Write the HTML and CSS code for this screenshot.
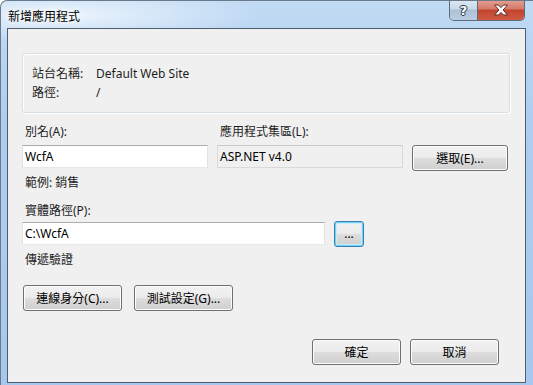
FILE: index.html
```html
<!DOCTYPE html>
<html lang="zh-Hant">
<head>
<meta charset="utf-8">
<title>新增應用程式</title>
<link rel="stylesheet" href="styles.css">
</head>
<body>
<div class="window">
  <div class="titlebar">
    <span class="title">新增應用程式</span>
    <div class="caption-buttons">
      <span class="cb help">?</span>
      <span class="cb close"><svg width="16" height="12" viewBox="0 0 16 12"><path d="M1.5 1h4l2.5 2.6L10.5 1h4l-4.4 5 4.4 5h-4L8 8.4 5.5 11h-4l4.4-5z" fill="#fff" stroke="#5a2a22" stroke-width="1" stroke-linejoin="round"/></svg></span>
    </div>
  </div>
  <div class="client">
    <div class="group">
      <div class="info-row"><span class="info-label">站台名稱:</span><span>Default Web Site</span></div>
      <div class="info-row"><span class="info-label">路徑:</span><span>/</span></div>
    </div>

    <div class="alias-grid">
      <span class="label">別名(A):</span>
      <span class="label">應用程式集區(L):</span>
      <span></span>
      <div class="textbox">WcfA</div>
      <div class="textbox readonly">ASP.NET v4.0</div>
      <button class="btn btn-select">選取(E)...</button>
    </div>

    <div class="label hint">範例: 銷售</div>

    <div class="label path-label">實體路徑(P):</div>
    <div class="path-row">
      <div class="textbox path-box">C:\WcfA</div>
      <button class="btn btn-browse focused">...</button>
    </div>

    <div class="label pass">傳遞驗證</div>

    <div class="btn-row">
      <button class="btn btn-wide">連線身分(C)...</button>
      <button class="btn btn-wide">測試設定(G)...</button>
    </div>

    <div class="dialog-buttons">
      <button class="btn btn-ok">確定</button>
      <button class="btn btn-ok">取消</button>
    </div>
  </div>
</div>
</body>
</html>
```

FILE: styles.css
```css
html, body {
  margin: 0;
  padding: 0;
  background: #ffffff;
}

body {
  font-family: "Noto Sans", "Noto Sans CJK TC", sans-serif;
  font-size: 12px;
  color: #1e1e1e;
}

.window {
  box-sizing: border-box;
  width: 533px;
  height: 385px;
  border: 1px solid #6b7a8a;
  border-bottom: none;
  border-right: none;
  border-radius: 7px 0 0 0;
  padding: 0 7px 0 6px;
  background:
    radial-gradient(ellipse 200px 28px at 60px 14px, rgba(238,246,253,0.95), rgba(238,246,253,0) 100%),
    linear-gradient(to bottom, #c2dbf4 0, #bcd7f3 27px, #aecdef 120px, #a7c8ee 100%);
  overflow: hidden;
}

.titlebar {
  height: 27px;
  display: flex;
  justify-content: space-between;
  align-items: flex-start;
}

.title {
  font-family: "Noto Sans CJK TC", sans-serif;
  font-size: 12px;
  line-height: 14px;
  margin: 8px 0 0 1px;
  color: #000;
  text-shadow: 0 0 6px #ffffff, 0 0 10px #ffffff;
}

.caption-buttons {
  display: flex;
  margin: -1px 1px 0 0;
  border: 1px solid #5d6b7b;
  border-top: none;
  border-radius: 0 0 5px 5px;
  overflow: hidden;
  height: 20px;
}

.cb {
  display: flex;
  align-items: center;
  justify-content: center;
  height: 20px;
}

.help {
  width: 27px;
  border-right: 1px solid #5d6b7b;
  background: linear-gradient(to bottom, #dde8f3 0, #c9d8e8 45%, #adc0d6 50%, #b9cde2 100%);
  font-family: "DejaVu Sans", sans-serif;
  font-weight: bold;
  font-size: 13px;
  color: #fff;
  text-shadow: 0 0 1px #2b3a4a, 1px 0 0 #2b3a4a, -1px 0 0 #2b3a4a, 0 1px 0 #2b3a4a, 0 -1px 0 #2b3a4a;
}

.close {
  width: 46px;
  background: linear-gradient(to bottom, #e4a192 0, #d47a68 45%, #c2442e 50%, #cf5a41 100%);
}

.client {
  box-sizing: border-box;
  width: 519px;
  height: 355px;
  border: 1px solid #4f5d6c;
  background: #f0f0f0;
  padding: 24px 15px 0 14px;
  font-family: "Noto Sans", "Noto Sans CJK TC", sans-serif;
}

.group {
  border: 1px solid #d5dfe5;
  border-radius: 3px;
  box-shadow: inset 1px 1px 0 #ffffff, 1px 1px 0 #ffffff;
  padding: 10px 9px 10px 9px;
}

.info-row {
  display: flex;
  line-height: 19px;
  height: 19px;
}

.info-label {
  width: 64px;
  flex: none;
}

.label {
  line-height: 16px;
  height: 16px;
  padding-left: 3px;
}

.alias-grid {
  display: grid;
  grid-template-columns: 186px 185px 95px;
  column-gap: 10px;
  row-gap: 5px;
  margin-top: 11px;
  align-items: start;
}

.alias-grid > .label:nth-child(2) {
  padding-left: 2px;
}

.textbox {
  box-sizing: border-box;
  height: 23px;
  line-height: 21px;
  border: 1px solid #e2e3ea;
  border-top-color: #abadb3;
  border-bottom-color: #e3e9ef;
  background: #ffffff;
  padding-left: 2px;
  color: #000;
  white-space: nowrap;
}

.textbox.readonly {
  background: #f0f0f0;
  border-color: #d9d9d9;
  border-top-color: #c9c9c9;
  margin-left: -1px;
}

.btn {
  box-sizing: border-box;
  height: 26px;
  padding: 0;
  margin: 0;
  font-family: "Noto Sans", "Noto Sans CJK TC", sans-serif;
  font-size: 12px;
  color: #000;
  border: 1px solid #707070;
  border-radius: 3px;
  background: linear-gradient(to bottom, #f2f2f2 0, #ebebeb 50%, #dddddd 51%, #cfcfcf 100%);
  box-shadow: inset 0 0 0 1px #fcfcfc;
}

.btn-select {
  width: 96px;
  margin-left: -1px;
}

.hint {
  margin-top: 4px;
}

.path-label {
  margin-top: 12px;
}

.path-row {
  display: flex;
  align-items: flex-start;
  margin-top: 2px;
  gap: 9px;
}

.path-box {
  width: 303px;
  margin-top: 1px;
}

.btn-browse {
  width: 30px;
  line-height: 20px;
}

.btn.focused {
  border-color: #3c7fb1;
  box-shadow: inset 0 0 0 1px #6fd3f7, inset 0 0 0 2px #c6ecfb;
}

.pass {
  margin-top: 5px;
}

.btn-row {
  display: flex;
  gap: 12px;
  margin-top: 17px;
  padding-left: 1px;
}

.btn-wide {
  width: 99px;
}

.dialog-buttons {
  display: flex;
  justify-content: flex-end;
  gap: 9px;
  margin-top: 28px;
  padding-right: 11px;
}

.btn-ok {
  width: 89px;
}
```
